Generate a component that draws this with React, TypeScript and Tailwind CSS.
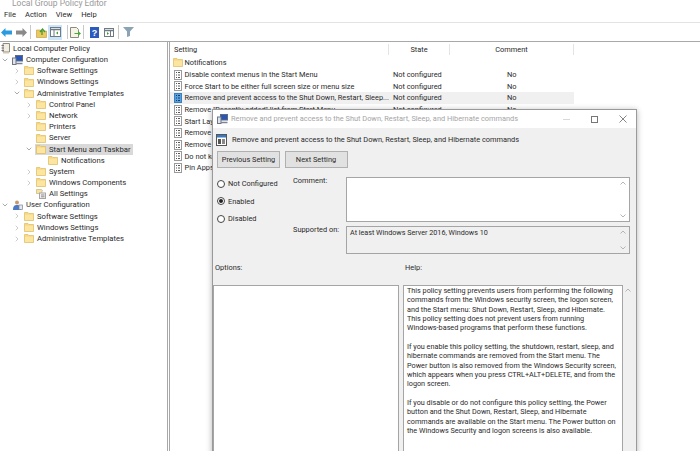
import { ChevronDown, ChevronRight } from "lucide-react"

type TreeIcon = "book" | "computer" | "user" | "folder" | "settings"

const tree: { label: string; depth: number; icon: TreeIcon; arrow?: "open" | "closed"; active?: boolean }[] = [
  { label: "Local Computer Policy", depth: -1, icon: "book" },
  { label: "Computer Configuration", depth: 0, icon: "computer", arrow: "open" },
  { label: "Software Settings", depth: 1, icon: "folder", arrow: "closed" },
  { label: "Windows Settings", depth: 1, icon: "folder", arrow: "closed" },
  { label: "Administrative Templates", depth: 1, icon: "folder", arrow: "open" },
  { label: "Control Panel", depth: 2, icon: "folder", arrow: "closed" },
  { label: "Network", depth: 2, icon: "folder", arrow: "closed" },
  { label: "Printers", depth: 2, icon: "folder" },
  { label: "Server", depth: 2, icon: "folder" },
  { label: "Start Menu and Taskbar", depth: 2, icon: "folder", arrow: "open", active: true },
  { label: "Notifications", depth: 3, icon: "folder" },
  { label: "System", depth: 2, icon: "folder", arrow: "closed" },
  { label: "Windows Components", depth: 2, icon: "folder", arrow: "closed" },
  { label: "All Settings", depth: 2, icon: "settings" },
  { label: "User Configuration", depth: 0, icon: "user", arrow: "open" },
  { label: "Software Settings", depth: 1, icon: "folder", arrow: "closed" },
  { label: "Windows Settings", depth: 1, icon: "folder", arrow: "closed" },
  { label: "Administrative Templates", depth: 1, icon: "folder", arrow: "closed" },
]

const settings = [
  { name: "Disable context menus in the Start Menu", state: "Not configured", comment: "No" },
  { name: "Force Start to be either full screen size or menu size", state: "Not configured", comment: "No" },
  { name: "Remove and prevent access to the Shut Down, Restart, Sleep...", state: "Not configured", comment: "No", active: true },
  { name: "Remove \"Recently added\" list from Start Menu", state: "Not configured", comment: "No" },
  { name: "Start Layout", state: "", comment: "" },
  { name: "Remove", state: "", comment: "" },
  { name: "Remove", state: "", comment: "" },
  { name: "Do not keep", state: "", comment: "" },
  { name: "Pin Apps", state: "", comment: "" },
]

const helpLines = [
  "This policy setting prevents users from performing the following",
  "commands from the Windows security screen, the logon screen,",
  "and the Start menu: Shut Down, Restart, Sleep, and Hibernate.",
  "This policy setting does not prevent users from running",
  "Windows-based programs that perform these functions.",
  "",
  "If you enable this policy setting, the shutdown, restart, sleep, and",
  "hibernate commands are removed from the Start menu. The",
  "Power button is also removed from the Windows Security screen,",
  "which appears when you press CTRL+ALT+DELETE, and from the",
  "logon screen.",
  "",
  "If you disable or do not configure this policy setting, the Power",
  "button and the Shut Down, Restart, Sleep, and Hibernate",
  "commands are available on the Start menu. The Power button on",
  "the Windows Security and logon screens is also available.",
]

function Folder() {
  return (
    <svg width="10" height="9" viewBox="0 0 10 9" className="shrink-0">
      <path d="M.5.500h3.500l1 1h4.500v7H.5z" fill="#f6d67e" stroke="#dcbb62" strokeWidth=".7" />
      <path d="M1 2.500h8V8H1z" fill="#fbe5a0" />
    </svg>
  )
}

function PolicyDoc({ active }: { active?: boolean }) {
  return (
    <svg width="8" height="10" viewBox="0 0 8 10" className="shrink-0">
      <rect x=".5" y=".5" width="7" height="9" fill={active ? "#5aa0dc" : "#fff"} stroke={active ? "#3a7fc0" : "#9a9a9a"} />
      <path d="M2 2.500h1M2 5h1M2 7.500h1M4 2.500h2M4 5h2M4 7.500h2" stroke={active ? "#14406e" : "#555"} />
    </svg>
  )
}

function Computer() {
  return (
    <svg width="11" height="10" viewBox="0 0 11 10" className="shrink-0">
      <rect x="3.500" y=".5" width="7" height="5.500" fill="#2a56b5" stroke="#5f6b80" />
      <rect x=".5" y="3" width="3.500" height="6.500" fill="#dfe3ea" stroke="#6e7687" />
      <path d="M4 8.500h6.500" stroke="#7c8494" strokeWidth="1.500" />
    </svg>
  )
}

function UserIcon() {
  return (
    <svg width="11" height="10" viewBox="0 0 11 10" className="shrink-0">
      <circle cx="5" cy="2.500" r="2" fill="#c79a6d" />
      <path d="M1 10c0-4 1.500-5 4-5s4 1 4 5z" fill="#4e79c4" />
      <rect x="7" y="5" width="3.500" height="4.500" fill="#e3e7ee" stroke="#7c8494" strokeWidth=".7" />
    </svg>
  )
}

function Book() {
  return (
    <svg width="9" height="11" viewBox="0 0 9 11" className="shrink-0">
      <path d="M2 .5h6.500v8.500H2z" fill="#f3eee2" stroke="#8d8a80" />
      <path d="M.5 2.500h2.500M.5 5h2.500M.5 7.500h2.500" stroke="#777" />
      <path d="M2 9h6v1.500H2z" fill="#cfc7b1" />
    </svg>
  )
}

function SettingsIcon() {
  return (
    <svg width="10" height="10" viewBox="0 0 10 10" className="shrink-0">
      <path d="M.5.500h5l1 1H6v3H.5z" fill="#f6e2a6" stroke="#c9b27a" strokeWidth=".7" />
      <rect x="3.500" y="4" width="6" height="5.500" fill="#f2f2f2" stroke="#a5a5a5" />
      <path d="M5 6h3.500M5 7.800h3.500" stroke="#8d8d8d" />
    </svg>
  )
}

const treeIcons = {
  book: <Book />,
  computer: <Computer />,
  user: <UserIcon />,
  folder: <Folder />,
  settings: <SettingsIcon />,
}

const depthClass: Record<number, string> = {
  [-1]: "w-[1px]",
  0: "w-[12px]",
  1: "w-[24px]",
  2: "w-[36px]",
  3: "w-[48px]",
}

function Toolbar() {
  return (
    <div className="flex h-[19px] items-center border-b border-[#a8a8a8] bg-white">
      <svg width="11" height="9" viewBox="0 0 11 9" className="ml-[1px]">
        <path d="M0 4.500L4.500 0v2.500H11v4H4.500V9z" fill="#2b9be0" />
      </svg>
      <svg width="11" height="9" viewBox="0 0 11 9" className="ml-[4px]">
        <path d="M11 4.500L6.500 0v2.500H0v4h6.500V9z" fill="#8a8a8a" />
      </svg>
      <div className="ml-[3px] h-[14px] w-px bg-[#c8c8c8]" />
      <svg width="11" height="11" viewBox="0 0 11 11" className="ml-[5px]">
        <path d="M.5 3h4l1 1h5v6.500H.5z" fill="#ecc95f" stroke="#b9973f" strokeWidth=".6" />
        <path d="M6 8V3.500M4 5l2.500-3L9 5" stroke="#3f9c35" strokeWidth="1.300" fill="none" />
      </svg>
      <div className="ml-[1px] flex h-[15px] w-[14px] items-center justify-center bg-[#cce4f7]">
        <svg width="11" height="10" viewBox="0 0 11 10">
          <rect x=".5" y=".5" width="10" height="9" fill="#fff" stroke="#6f7a84" />
          <path d="M.5 2.500h10" stroke="#6f7a84" strokeWidth="1.500" />
          <path d="M4 3v6" stroke="#6f7a84" />
          <path d="M6 6l2-1.500v3z" fill="#3f9c35" />
        </svg>
      </div>
      <div className="ml-[5px] h-[14px] w-px bg-[#c8c8c8]" />
      <svg width="11" height="11" viewBox="0 0 11 11" className="ml-[2px]">
        <path d="M.5.500h6l2 2v8h-8z" fill="#f7f4e6" stroke="#8b8b80" />
        <path d="M4.500 6h3.500V4l3 2.500L8 9V7H4.500z" fill="#4aa83d" />
      </svg>
      <div className="ml-[2px] h-[14px] w-px bg-[#c8c8c8]" />
      <svg width="9" height="11" viewBox="0 0 9 11" className="ml-[6px]">
        <rect width="9" height="11" fill="#2a5bbd" />
        <text x="4.500" y="9" textAnchor="middle" fontSize="9" fontWeight="700" fill="#fff" fontFamily="Liberation Sans, sans-serif">?</text>
      </svg>
      <svg width="10" height="9" viewBox="0 0 10 9" className="ml-[5px]">
        <rect x=".5" y=".5" width="9" height="8" fill="#fff" stroke="#6f7a84" />
        <path d="M.5 2.500h9" stroke="#6f7a84" strokeWidth="1.500" />
        <path d="M6.500 3v5" stroke="#6f7a84" />
        <path d="M3 4l2 1.500L3 7z" fill="#3f9c35" />
      </svg>
      <div className="ml-[4px] h-[14px] w-px bg-[#c8c8c8]" />
      <svg width="11" height="10" viewBox="0 0 11 10" className="ml-[4px]">
        <path d="M0 0h11L7 4.500V9L4 10V4.500z" fill="#8aa3b5" />
      </svg>
    </div>
  )
}

function Scrollbar() {
  return (
    <div className="flex h-full w-[10px] shrink-0 flex-col items-center justify-between py-[3px]">
      <svg width="6" height="4" viewBox="0 0 6 4"><path d="M.5 3.500L3 1l2.500 2.500" stroke="#b5b5b5" fill="none" /></svg>
      <svg width="6" height="4" viewBox="0 0 6 4"><path d="M.5.500L3 3 5.500.500" stroke="#b5b5b5" fill="none" /></svg>
    </div>
  )
}

function Radio({ label, checked }: { label: string; checked?: boolean }) {
  return (
    <div className="flex h-[17.500px] items-center gap-[3px]">
      <span className="flex size-[8px] items-center justify-center rounded-full border border-[#444] bg-white">
        {checked && <span className="size-[4px] rounded-full bg-[#222]" />}
      </span>
      <span>{label}</span>
    </div>
  )
}

function PolicyDialog() {
  return (
    <div className="absolute left-[212px] top-[109px] h-[360px] w-[425px] border border-[#9a9a9a] bg-[#f0f0f0] text-[7.400px] shadow-[0_1px_6px_rgba(0,0,0,0.3)]">
      <div className="flex h-[18px] items-center bg-white pl-[4px] text-[#a5a5a5]">
        <Computer />
        <span className="ml-[3px]">Remove and prevent access to the Shut Down, Restart, Sleep, and Hibernate commands</span>
        <div className="ml-auto mr-[9px] flex items-center gap-[21px]">
          <span className="h-px w-[7px] bg-[#d8d8d8]" />
          <span className="size-[7px] border border-[#777]" />
          <svg width="8" height="8" viewBox="0 0 8 8"><path d="M.5.500l7 7M7.500.500l-7 7" stroke="#666" strokeWidth=".8" /></svg>
        </div>
      </div>
      <div className="flex h-[23px] items-center gap-[5px] pl-[3px]">
        <svg width="11" height="12" viewBox="0 0 11 12" className="shrink-0">
          <rect x=".5" y=".5" width="10" height="11" fill="#fff" stroke="#555" />
          <rect x="1" y="1" width="9" height="2.500" fill="#3b78c4" />
          <rect x="2" y="5" width="3" height="5" fill="#555" />
          <rect x="6" y="5" width="3" height="5" fill="#888" />
        </svg>
        <span>Remove and prevent access to the Shut Down, Restart, Sleep, and Hibernate commands</span>
      </div>
      <div className="flex gap-[4.500px] pl-[4px]">
        <div className="flex h-[17px] w-[63px] items-center justify-center border border-[#b0b0b0] bg-[#e1e1e1]">Previous Setting</div>
        <div className="flex h-[17px] w-[63px] items-center justify-center border border-[#b0b0b0] bg-[#e1e1e1]">Next Setting</div>
      </div>
      <div className="mt-[9px] flex">
        <div className="-mt-[2px] w-[76px] pl-[4px]">
          <Radio label="Not Configured" />
          <Radio label="Enabled" checked />
          <Radio label="Disabled" />
        </div>
        <div className="-mt-[2px] w-[57px] pl-[4px]">
          <div className="h-[48.800px]">Comment:</div>
          <div>Supported on:</div>
        </div>
        <div className="w-[284px]">
          <div className="flex h-[45px] border border-[#a5a5a5] bg-white pr-[1px]">
            <div className="flex-1" />
            <Scrollbar />
          </div>
          <div className="mt-[4px] flex h-[28px] border border-[#a5a5a5] bg-[#f0f0f0] pr-[1px]">
            <div className="flex-1 pl-[3px] pt-[1px] text-[7.200px]">At least Windows Server 2016, Windows 10</div>
            <Scrollbar />
          </div>
        </div>
      </div>
      <div className="mt-[5px] flex h-[18px] items-center">
        <span className="ml-[2px] w-[190px]">Options:</span>
        <span>Help:</span>
      </div>
      <div className="mt-[8px] flex">
        <div className="h-[170px] w-[186px] border border-[#a5a5a5] bg-white" />
        <div className="ml-[4px] h-[170px] w-[220px] border border-[#a5a5a5] bg-white px-[3px] text-[7.250px] leading-[9.350px]">
          {helpLines.map((line, i) => (
            <div key={i} className="h-[9.350px] whitespace-nowrap">{line}</div>
          ))}
        </div>
        <div className="pl-[2px] pt-[3px]">
          <svg width="6" height="4" viewBox="0 0 6 4"><path d="M.5 3.500L3 1l2.500 2.500" stroke="#b5b5b5" fill="none" /></svg>
        </div>
      </div>
    </div>
  )
}

export default function App() {
  return (
    <div className="relative h-[451px] w-[700px] overflow-hidden bg-white font-['Roboto',sans-serif] text-[7.600px] text-[#2a2a2a]">
      <div className="flex h-[7px] items-end pl-[12px] text-[8.500px] text-[#999]">
        <span className="translate-y-[1px] leading-[10px]">Local Group Policy Editor</span>
      </div>
      <div className="flex h-[16px] items-center gap-[9px] border-b border-[#e4e4e4] pl-[4px]">
        <span>File</span>
        <span>Action</span>
        <span>View</span>
        <span>Help</span>
      </div>
      <Toolbar />
      <div className="flex h-[410px]">
        <div className="w-[168px] shrink-0 border-r border-[#a8a8a8] pt-[1px] text-[7.700px]">
          {tree.map((node, i) => (
            <div key={i} className="flex h-[11.200px] items-center">
              <div className={`flex items-center justify-end ${depthClass[node.depth]}`}>
                {node.arrow === "open" && <ChevronDown size={8} strokeWidth={1.500} className="mr-[3px] text-[#555]" />}
                {node.arrow === "closed" && <ChevronRight size={8} strokeWidth={1.500} className="mr-[3px] text-[#999]" />}
              </div>
              <div className={`flex items-center gap-[3px] pr-[3px] ${node.active ? "-ml-[1px] bg-[#d9d9d9] pl-[1px]" : ""}`}>
                {treeIcons[node.icon]}
                <span className="whitespace-nowrap">{node.label}</span>
              </div>
            </div>
          ))}
        </div>
        <div className="ml-[1px] flex-1 border-l border-[#a8a8a8] text-[7.400px]">
          <div className="flex h-[15px] w-[404px] items-center">
            <span className="w-[218px] pl-[4px]">Setting</span>
            <span className="w-[61px] border-l border-[#e4e4e4] text-center">State</span>
            <span className="flex-1 border-x border-[#e4e4e4] text-center">Comment</span>
          </div>
          <div className="flex h-[11.700px] w-[404px] items-center gap-[1.500px] pl-[3px]">
            <Folder />
            <span>Notifications</span>
          </div>
          {settings.map((row, i) => (
            <div key={i} className={`flex h-[11.700px] w-[404px] items-center ${row.active ? "bg-[#f0f0f0]" : ""}`}>
              <div className="flex w-[223px] items-center gap-[2.500px] pl-[4px]">
                <PolicyDoc active={row.active} />
                <span className="whitespace-nowrap">{row.name}</span>
              </div>
              <span className="w-[114px]">{row.state}</span>
              <span>{row.comment}</span>
            </div>
          ))}
        </div>
      </div>
      <PolicyDialog />
    </div>
  )
}
